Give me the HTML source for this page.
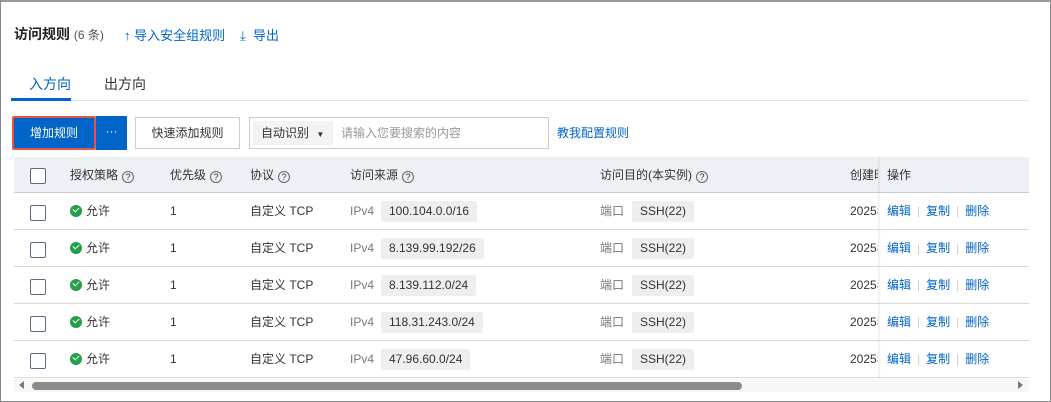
<!DOCTYPE html>
<html><head><meta charset="utf-8"><style>
*{margin:0;padding:0;box-sizing:border-box}
body{width:1051px;height:402px;background:#fff;font-family:"Liberation Sans","Noto Sans CJK SC",sans-serif;font-size:12px;color:#333;position:relative;overflow:hidden}
.frame{position:absolute;left:0;top:0;width:1051px;height:402px;border:1px solid #888;border-top:2px solid #999}
.a{position:absolute;white-space:nowrap}
.c{position:absolute;white-space:nowrap;height:21px;line-height:21px}
.blue{color:#0064c8}
.row{position:absolute;left:14px;width:1015px;height:37px;border-bottom:1px solid #d8d8d8}
.cb{position:absolute;left:16px;width:16px;height:16px;border:1px solid #5a6a80;border-radius:2px;background:#fff}
.tag{position:absolute;background:#eeeeee;height:21px;line-height:21px;padding:0 8px;border-radius:2px}
.q{display:inline-block;width:12px;height:12px;border:1px solid #666;border-radius:50%;font-size:9px;line-height:10px;text-align:center;margin-left:4px;vertical-align:-1px}
.ok{display:inline-block;width:12px;height:12px;border-radius:50%;background:#23a047;vertical-align:-2px;margin-right:4px;position:relative}
.ok:after{content:"";position:absolute;left:3px;top:2px;width:5px;height:3px;border-left:1.6px solid #fff;border-bottom:1.6px solid #fff;transform:rotate(-45deg)}
.sep{color:#ccc;margin:0 6px}
</style></head><body>
<div class="frame"></div>
<div class="a" style="left:14px;top:24px;font-size:14px"><b style="font-weight:600;color:#222">访问规则</b> <span style="color:#555;font-size:12px">(6 条)</span></div>
<div class="a blue" style="left:124px;top:25px;font-size:13px">↑ 导入安全组规则</div>
<div class="a blue" style="left:240px;top:25px;font-size:13px">⤓&nbsp; 导出</div>
<div class="a blue" style="left:29px;top:74px;font-size:14px">入方向</div>
<div class="a" style="left:104px;top:74px;font-size:14px;color:#333">出方向</div>
<div class="a" style="left:14px;top:100px;width:1015px;height:1px;background:#e3e3e3"></div>
<div class="a" style="left:11px;top:98px;width:60px;height:3px;background:#0064c8"></div>
<div class="a" style="left:12px;top:116px;width:84px;height:34px;border:2px solid #e8543c;border-radius:2px;background:#0064c8;color:#fff;text-align:center;line-height:30px">增加规则</div>
<div class="a" style="left:96px;top:116px;width:31px;height:34px;background:#0064c8;color:#fff;text-align:center;line-height:30px">···</div>
<div class="a" style="left:135px;top:117px;width:105px;height:32px;border:1px solid #ccc;text-align:center;line-height:30px;color:#333">快速添加规则</div>
<div class="a" style="left:249px;top:117px;width:300px;height:32px;border:1px solid #ccc"></div>
<div class="a" style="left:253px;top:121px;width:80px;height:24px;background:#f3f3f3;line-height:24px;padding-left:8px;color:#333">自动识别 <span style="font-size:8px;margin-left:4px">▼</span></div>
<div class="c" style="left:341px;top:123px;color:#999">请输入您要搜索的内容</div>
<div class="c blue" style="left:557px;top:123px">教我配置规则</div>

<div class="a" style="left:14px;top:157px;width:1015px;height:36px;background:#edf0f5;border-bottom:1px solid #ccc"></div>
<div class="cb" style="top:168px;left:30px"></div>
<div class="c" style="left:70px;top:165px">授权策略<span class="q">?</span></div>
<div class="c" style="left:170px;top:165px">优先级<span class="q">?</span></div>
<div class="c" style="left:250px;top:165px">协议<span class="q">?</span></div>
<div class="c" style="left:350px;top:165px">访问来源<span class="q">?</span></div>
<div class="c" style="left:600px;top:165px">访问目的(本实例)<span class="q">?</span></div>
<div class="c" style="left:850px;top:165px;width:28px;overflow:hidden">创建时间</div>
<div class="c" style="left:887px;top:165px">操作</div>

<div class="row" style="top:193px"></div><div class="row" style="top:230px"></div><div class="row" style="top:267px"></div><div class="row" style="top:304px"></div><div class="row" style="top:341px"></div>

<div class="cb" style="left:30px;top:205px"></div><div class="cb" style="left:30px;top:242px"></div><div class="cb" style="left:30px;top:279px"></div><div class="cb" style="left:30px;top:316px"></div><div class="cb" style="left:30px;top:353px"></div>

<div class="c" style="left:70px;top:201px"><span class="ok"></span>允许</div>
<div class="c" style="left:70px;top:238px"><span class="ok"></span>允许</div>
<div class="c" style="left:70px;top:275px"><span class="ok"></span>允许</div>
<div class="c" style="left:70px;top:312px"><span class="ok"></span>允许</div>
<div class="c" style="left:70px;top:349px"><span class="ok"></span>允许</div>

<div class="c" style="left:170px;top:201px">1</div><div class="c" style="left:170px;top:238px">1</div><div class="c" style="left:170px;top:275px">1</div><div class="c" style="left:170px;top:312px">1</div><div class="c" style="left:170px;top:349px">1</div>
<div class="c" style="left:250px;top:201px">自定义 TCP</div><div class="c" style="left:250px;top:238px">自定义 TCP</div><div class="c" style="left:250px;top:275px">自定义 TCP</div><div class="c" style="left:250px;top:312px">自定义 TCP</div><div class="c" style="left:250px;top:349px">自定义 TCP</div>

<div class="c" style="left:350px;top:201px;color:#777">IPv4</div><div class="tag" style="left:381px;top:201px">100.104.0.0/16</div>
<div class="c" style="left:350px;top:238px;color:#777">IPv4</div><div class="tag" style="left:381px;top:238px">8.139.99.192/26</div>
<div class="c" style="left:350px;top:275px;color:#777">IPv4</div><div class="tag" style="left:381px;top:275px">8.139.112.0/24</div>
<div class="c" style="left:350px;top:312px;color:#777">IPv4</div><div class="tag" style="left:381px;top:312px">118.31.243.0/24</div>
<div class="c" style="left:350px;top:349px;color:#777">IPv4</div><div class="tag" style="left:381px;top:349px">47.96.60.0/24</div>

<div class="c" style="left:600px;top:201px;color:#777">端口</div><div class="tag" style="left:632px;top:201px">SSH(22)</div>
<div class="c" style="left:600px;top:238px;color:#777">端口</div><div class="tag" style="left:632px;top:238px">SSH(22)</div>
<div class="c" style="left:600px;top:275px;color:#777">端口</div><div class="tag" style="left:632px;top:275px">SSH(22)</div>
<div class="c" style="left:600px;top:312px;color:#777">端口</div><div class="tag" style="left:632px;top:312px">SSH(22)</div>
<div class="c" style="left:600px;top:349px;color:#777">端口</div><div class="tag" style="left:632px;top:349px">SSH(22)</div>

<div class="c" style="left:850px;top:201px;width:28px;overflow:hidden">2025年</div>
<div class="c" style="left:850px;top:238px;width:28px;overflow:hidden">2025年</div>
<div class="c" style="left:850px;top:275px;width:28px;overflow:hidden">2025年</div>
<div class="c" style="left:850px;top:312px;width:28px;overflow:hidden">2025年</div>
<div class="c" style="left:850px;top:349px;width:28px;overflow:hidden">2025年</div>
<div class="a" style="left:878px;top:157px;width:3px;height:221px;background:linear-gradient(90deg,rgba(0,0,0,0.08),rgba(0,0,0,0))"></div>

<div class="c blue" style="left:887px;top:201px">编辑<span class="sep">|</span>复制<span class="sep">|</span>删除</div>
<div class="c blue" style="left:887px;top:238px">编辑<span class="sep">|</span>复制<span class="sep">|</span>删除</div>
<div class="c blue" style="left:887px;top:275px">编辑<span class="sep">|</span>复制<span class="sep">|</span>删除</div>
<div class="c blue" style="left:887px;top:312px">编辑<span class="sep">|</span>复制<span class="sep">|</span>删除</div>
<div class="c blue" style="left:887px;top:349px">编辑<span class="sep">|</span>复制<span class="sep">|</span>删除</div>

<div class="a" style="left:14px;top:379px;width:1015px;height:13px;background:#f7f7f7"></div>
<div class="a" style="left:19px;top:381px;width:0;height:0;border-top:4px solid transparent;border-bottom:4px solid transparent;border-right:5px solid #777"></div>
<div class="a" style="left:1018px;top:381px;width:0;height:0;border-top:4px solid transparent;border-bottom:4px solid transparent;border-left:5px solid #777"></div>
<div class="a" style="left:32px;top:382px;width:710px;height:8px;background:#8c8c8c;border-radius:4px"></div>
</body></html>
